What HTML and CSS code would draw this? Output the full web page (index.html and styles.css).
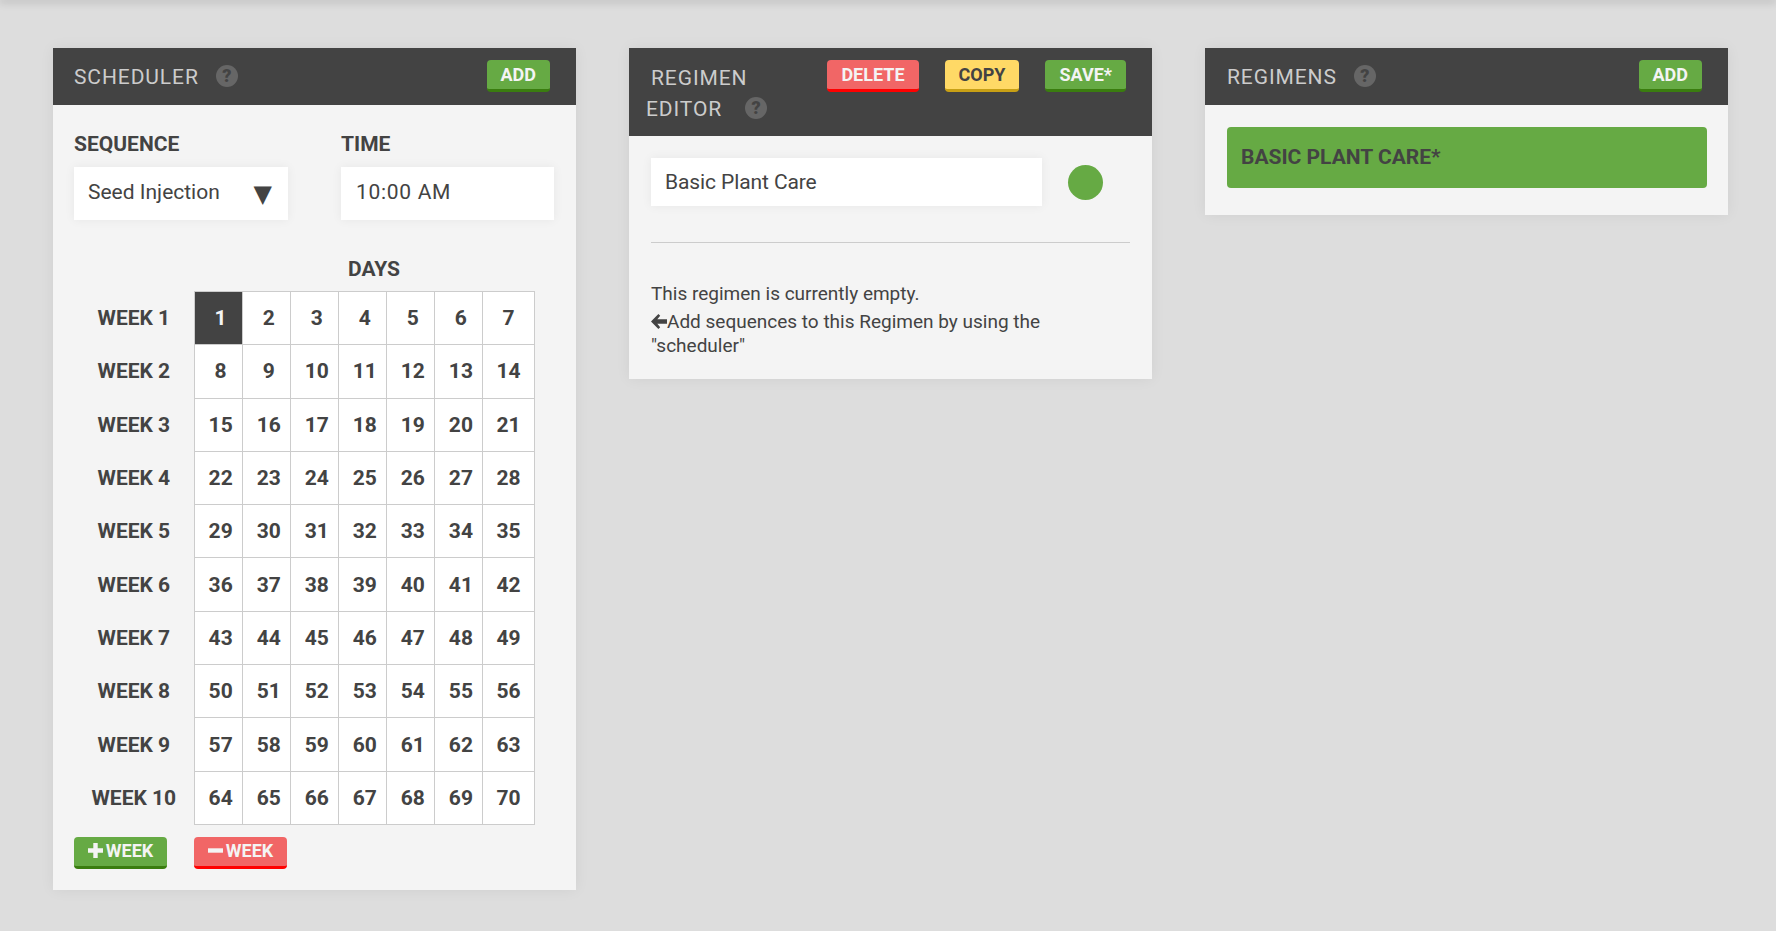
FILE: index.html
```html
<!DOCTYPE html>
<html lang="en">
<head>
    <meta charset="UTF-8">
    <title>Regimens</title>
    <link rel="stylesheet" href="styles.css">
</head>
<body>
    <div class="topbar"></div>
    <div class="columns">
        <!-- Scheduler -->
        <section class="panel">
            <div class="panel-header">
                <h3 class="panel-title">Scheduler<span class="help">?</span></h3>
                <button class="btn green">Add</button>
            </div>
            <div class="panel-body scheduler-body">
                <div class="fields">
                    <div class="field">
                        <label>Sequence</label>
                        <div class="input select">Seed Injection<span class="caret">▼</span></div>
                    </div>
                    <div class="field">
                        <label>Time</label>
                        <div class="input time">10:00 AM</div>
                    </div>
                </div>
                <h4 class="days-title">Days</h4>
                <table class="week-grid">
                    <tr><th>Week 1</th><td class="selected">1</td><td>2</td><td>3</td><td>4</td><td>5</td><td>6</td><td>7</td></tr>
                    <tr><th>Week 2</th><td>8</td><td>9</td><td>10</td><td>11</td><td>12</td><td>13</td><td>14</td></tr>
                    <tr><th>Week 3</th><td>15</td><td>16</td><td>17</td><td>18</td><td>19</td><td>20</td><td>21</td></tr>
                    <tr><th>Week 4</th><td>22</td><td>23</td><td>24</td><td>25</td><td>26</td><td>27</td><td>28</td></tr>
                    <tr><th>Week 5</th><td>29</td><td>30</td><td>31</td><td>32</td><td>33</td><td>34</td><td>35</td></tr>
                    <tr><th>Week 6</th><td>36</td><td>37</td><td>38</td><td>39</td><td>40</td><td>41</td><td>42</td></tr>
                    <tr><th>Week 7</th><td>43</td><td>44</td><td>45</td><td>46</td><td>47</td><td>48</td><td>49</td></tr>
                    <tr><th>Week 8</th><td>50</td><td>51</td><td>52</td><td>53</td><td>54</td><td>55</td><td>56</td></tr>
                    <tr><th>Week 9</th><td>57</td><td>58</td><td>59</td><td>60</td><td>61</td><td>62</td><td>63</td></tr>
                    <tr><th>Week 10</th><td>64</td><td>65</td><td>66</td><td>67</td><td>68</td><td>69</td><td>70</td></tr>
                </table>
                <div class="week-buttons">
                    <button class="btn green week-btn">
                        <svg width="15" height="15" viewBox="0 0 15 15"><path d="M5.3 0h4.4v5.3H15v4.4H9.700v5.300H5.300V9.700H0V5.300h5.300z" fill="#f4f4f4"/></svg>Week
                    </button>
                    <button class="btn red week-btn">
                        <svg width="15" height="15" viewBox="0 0 15 15"><path d="M0 5.300h15v4.400H0z" fill="#f4f4f4"/></svg>Week
                    </button>
                </div>
            </div>
        </section>

        <!-- Regimen editor -->
        <section class="panel">
            <div class="panel-header editor-header">
                <h3 class="panel-title editor-title">Regimen Editor<span class="help">?</span></h3>
                <div class="editor-buttons">
                    <button class="btn red">Delete</button>
                    <button class="btn yellow">Copy</button>
                    <button class="btn green">Save*</button>
                </div>
            </div>
            <div class="panel-body editor-body">
                <div class="name-row">
                    <div class="input name">Basic Plant Care</div>
                    <span class="color-dot"></span>
                </div>
                <hr>
                <p class="empty-note">This regimen is currently empty.</p>
                <p class="empty-hint">
                    <svg class="arrow" width="16" height="15" viewBox="0 0 16 15"><path d="M7.400 0 9.200 1.800 6.300 5.200H16V9.800H6.300L9.200 13.200 7.400 15 0 7.500z" fill="#434343"/></svg>Add sequences to this Regimen by using the "scheduler"
                </p>
            </div>
        </section>

        <!-- Regimens list -->
        <section class="panel">
            <div class="panel-header list-header">
                <h3 class="panel-title">Regimens<span class="help">?</span></h3>
                <button class="btn green">Add</button>
            </div>
            <div class="panel-body list-body">
                <div class="regimen-item">Basic Plant Care*</div>
            </div>
        </section>
    </div>
</body>
</html>
```

FILE: styles.css
```css
* {
    box-sizing: border-box;
}
body {
    margin: 0;
    background: #dddddd;
    font-family: 'Roboto', sans-serif;
    color: #434343;
    height: 931px;
    overflow: hidden;
}
.topbar {
    height: 0;
    box-shadow: 0 0 8px 1px rgba(0, 0, 0, 0.4);
}
.columns {
    display: grid;
    grid-template-columns: repeat(3, 523px);
    column-gap: 53px;
    align-items: start;
    padding: 48px 0 0 53px;
}
.panel {
    background: #f4f4f4;
    box-shadow: 0 0 14px rgba(0, 0, 0, 0.06);
}
.panel-header {
    background: #434343;
    height: 57px;
    padding: 12px 26px 0 21px;
    display: flex;
    justify-content: space-between;
    align-items: flex-start;
}
.list-header {
    padding-left: 22px;
}
.panel-title {
    margin: 0;
    padding-top: 5px;
    font-size: 21px;
    line-height: 24px;
    font-weight: 400;
    letter-spacing: 0.9px;
    text-transform: uppercase;
    color: #cccccc;
}
.help {
    display: inline-block;
    width: 22px;
    height: 22px;
    margin-left: 17px;
    border-radius: 50%;
    background: #666666;
    color: #434343;
    font-size: 18px;
    line-height: 22px;
    font-weight: 900;
    letter-spacing: 0;
    text-align: center;
    text-indent: 0;
    vertical-align: 2px;
}
.btn {
    height: 32px;
    padding: 0 14px 1px;
    border: none;
    border-bottom: 3px solid;
    border-radius: 4px;
    font-family: 'Roboto', sans-serif;
    font-size: 18px;
    font-weight: 700;
    text-transform: uppercase;
    color: #f4f4f4;
}
.green {
    background: #66aa44;
    border-bottom-color: #3a7d0f;
}
.red {
    background: #f16666;
    border-bottom-color: #ff0000;
}
.yellow {
    background: #ffd966;
    border-bottom-color: #c8a015;
    color: #434343;
}

/* scheduler */
.scheduler-body {
    padding: 27px 21px 21px;
}
.fields {
    display: grid;
    grid-template-columns: 214px 213px;
    column-gap: 53px;
}
.field label {
    display: block;
    font-size: 21px;
    line-height: 24px;
    font-weight: 700;
    text-transform: uppercase;
    margin-bottom: 11px;
}
.input {
    background: #ffffff;
    height: 53px;
    line-height: 51px;
    padding-left: 14px;
    font-size: 21px;
    box-shadow: 0 0 10px rgba(0, 0, 0, 0.06);
}
.select {
    display: flex;
    justify-content: space-between;
    padding-right: 16px;
}
.caret {
    font-family: 'DejaVu Sans', sans-serif;
    font-size: 24px;
    line-height: 55px;
}
.time {
    padding-left: 15px;
    letter-spacing: 0.7px;
}
.days-title {
    margin: 37px 0 10px;
    padding-left: 274px;
    font-size: 21px;
    line-height: 24px;
    font-weight: 700;
    text-transform: uppercase;
}
.week-grid {
    border-collapse: collapse;
    table-layout: fixed;
    width: 461px;
}
.week-grid th {
    width: 120px;
    height: 53.3px;
    padding: 0;
    font-size: 21px;
    font-weight: 700;
    text-transform: uppercase;
    text-align: center;
}
.week-grid td {
    padding: 0 0 0 5px;
    height: 53.3px;
    width: 48px;
    background: #ffffff;
    border: 1px solid #cccccc;
    font-size: 21px;
    font-weight: 700;
    text-align: center;
}
.week-grid td:last-child {
    width: 52px;
    padding: 0;
}
.week-grid td.selected {
    background: #434343;
    color: #f4f4f4;
}
.week-buttons {
    display: flex;
    gap: 27px;
    margin-top: 12px;
}
.week-btn {
    width: 93px;
    padding: 0 0 1px;
    display: flex;
    align-items: center;
    justify-content: center;
    gap: 3px;
}

/* regimen editor */
.editor-header {
    height: 88px;
    padding-left: 17px;
}
.editor-title {
    width: 150px;
    line-height: 31px;
    text-indent: 5px;
    padding-top: 3px;
}
.editor-title .help {
    margin-left: 23px;
}
.editor-buttons {
    display: flex;
    gap: 26px;
}
.editor-body {
    padding: 22px 22px 21px;
}
.name-row {
    display: flex;
    align-items: center;
    gap: 26px;
}
.name {
    width: 391px;
    height: 48px;
    line-height: 48px;
    letter-spacing: -0.1px;
}
.color-dot {
    width: 35px;
    height: 35px;
    border-radius: 50%;
    background: #66aa44;
}
hr {
    margin: 36px 0 0;
    border: none;
    border-top: 1px solid #cccccc;
}
.empty-note {
    margin: 39px 0 0;
    font-size: 19px;
    line-height: 24px;
}
.empty-hint {
    margin: 4px 0 0;
    width: 420px;
    font-size: 19px;
    line-height: 24px;
}
.arrow {
    vertical-align: -1px;
}

/* regimens list */
.list-body {
    padding: 22px 21px 27px 22px;
}
.regimen-item {
    height: 61px;
    line-height: 60px;
    padding-left: 14px;
    border-radius: 4px;
    background: #66aa44;
    font-size: 21px;
    font-weight: 700;
    text-transform: uppercase;
}
```
